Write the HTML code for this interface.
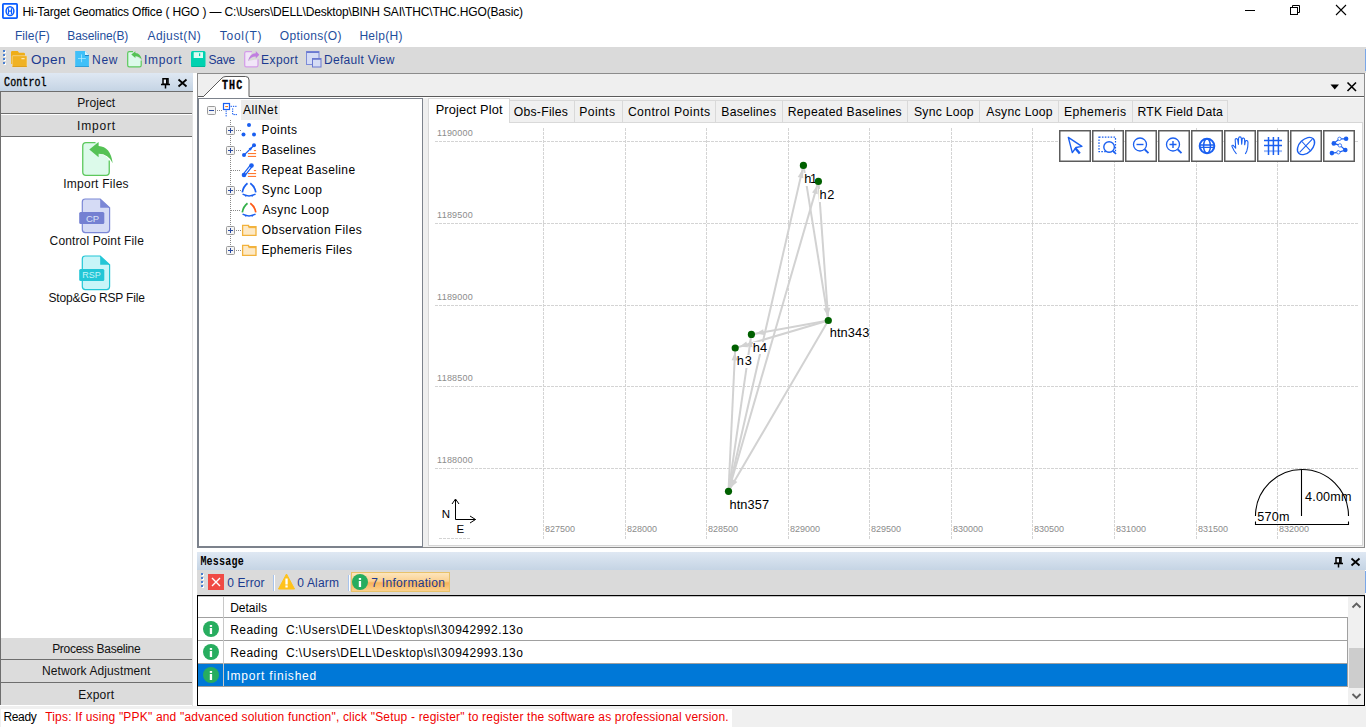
<!DOCTYPE html>
<html><head><meta charset="utf-8"><title>HGO</title>
<style>
html,body{margin:0;padding:0;width:1366px;height:727px;overflow:hidden;background:#fff;position:relative}
.t{position:absolute;white-space:pre;line-height:1;font-family:"Liberation Sans",sans-serif}
svg{overflow:visible}
</style></head><body>
<div style="position:absolute;left:0px;top:0px;width:1366px;height:23px;background:#fff"></div>
<svg style="position:absolute;left:2px;top:3px;" width="17" height="17" viewBox="0 0 17 17"><rect x="0.9" y="0.9" width="14.2" height="14.2" rx="0.8" fill="#fff" stroke="#0a5cff" stroke-width="1.8"/><ellipse cx="8" cy="8.1" rx="3.9" ry="4.4" fill="none" stroke="#0a5cff" stroke-width="1.5"/><path d="M6.5 5.3V10.9M9.5 5.3V10.9M6.5 8.1H9.5" stroke="#0a5cff" stroke-width="1.2"/></svg>
<div class="t" style="left:22.44px;top:5.84px;font-size:12px;color:#000;font-weight:normal;font-family:'Liberation Sans', sans-serif;letter-spacing:-0.156px;">Hi-Target Geomatics Office ( HGO ) — C:\Users\DELL\Desktop\BINH SAI\THC\THC.HGO(Basic)</div>
<div style="position:absolute;left:1245px;top:10px;width:10px;height:1px;background:#000"></div>
<svg style="position:absolute;left:1289px;top:4px;" width="12" height="12" viewBox="0 0 12 12"><rect x="1.5" y="3.5" width="7" height="7" fill="none" stroke="#000" stroke-width="1"/><path d="M3.5 3.5V1.5H10.5V8.5H8.5" fill="none" stroke="#000" stroke-width="1"/></svg>
<svg style="position:absolute;left:1335px;top:4px;" width="12" height="12" viewBox="0 0 12 12"><path d="M1 1L11 11M11 1L1 11" stroke="#000" stroke-width="1.1"/></svg>
<div class="t" style="left:15.04px;top:29.84px;font-size:12px;color:#1f4e9c;font-weight:normal;font-family:'Liberation Sans', sans-serif;letter-spacing:0.010px;">File(F)</div>
<div class="t" style="left:67.34px;top:29.84px;font-size:12px;color:#1f4e9c;font-weight:normal;font-family:'Liberation Sans', sans-serif;letter-spacing:-0.100px;">Baseline(B)</div>
<div class="t" style="left:147.60px;top:29.84px;font-size:12px;color:#1f4e9c;font-weight:normal;font-family:'Liberation Sans', sans-serif;letter-spacing:0.393px;">Adjust(N)</div>
<div class="t" style="left:219.76px;top:29.84px;font-size:12px;color:#1f4e9c;font-weight:normal;font-family:'Liberation Sans', sans-serif;letter-spacing:0.740px;">Tool(T)</div>
<div class="t" style="left:279.86px;top:29.84px;font-size:12px;color:#1f4e9c;font-weight:normal;font-family:'Liberation Sans', sans-serif;letter-spacing:0.327px;">Options(O)</div>
<div class="t" style="left:359.44px;top:29.84px;font-size:12px;color:#1f4e9c;font-weight:normal;font-family:'Liberation Sans', sans-serif;letter-spacing:0.267px;">Help(H)</div>
<div style="position:absolute;left:0px;top:47px;width:1366px;height:26px;background:#dadada"></div>
<div style="position:absolute;left:1365px;top:49px;width:1px;height:22px;background:#7aa7e8"></div>
<div style="position:absolute;left:3px;top:50px;width:2px;height:2px;background:#4a7fd0;box-shadow:1px 1px 0 #fff"></div>
<div style="position:absolute;left:3px;top:54px;width:2px;height:2px;background:#4a7fd0;box-shadow:1px 1px 0 #fff"></div>
<div style="position:absolute;left:3px;top:58px;width:2px;height:2px;background:#4a7fd0;box-shadow:1px 1px 0 #fff"></div>
<div style="position:absolute;left:3px;top:62px;width:2px;height:2px;background:#4a7fd0;box-shadow:1px 1px 0 #fff"></div>
<div class="t" style="left:30.89px;top:52.79px;font-size:13.6px;color:#1b3a8f;font-weight:normal;font-family:'Liberation Sans', sans-serif;letter-spacing:0.448px;">Open</div>
<div class="t" style="left:92.04px;top:53.84px;font-size:12px;color:#1b3a8f;font-weight:normal;font-family:'Liberation Sans', sans-serif;letter-spacing:0.700px;">New</div>
<div class="t" style="left:143.92px;top:53.84px;font-size:12px;color:#1b3a8f;font-weight:normal;font-family:'Liberation Sans', sans-serif;letter-spacing:0.716px;">Import</div>
<div class="t" style="left:208.46px;top:53.84px;font-size:12px;color:#1b3a8f;font-weight:normal;font-family:'Liberation Sans', sans-serif;letter-spacing:-0.227px;">Save</div>
<div class="t" style="left:261.04px;top:53.84px;font-size:12px;color:#1b3a8f;font-weight:normal;font-family:'Liberation Sans', sans-serif;letter-spacing:0.420px;">Export</div>
<div class="t" style="left:324.04px;top:53.84px;font-size:12px;color:#1b3a8f;font-weight:normal;font-family:'Liberation Sans', sans-serif;letter-spacing:0.296px;">Default View</div>
<svg style="position:absolute;left:11px;top:51px;" width="17" height="17" viewBox="0 0 17 17"><path d="M0 1.2Q0 0 1.2 0H6.8L8 1.8H12.8Q14 1.8 14 3V13H0Z" fill="#efae18"/><path d="M1.2 15.2V5.4Q1.2 4.7 2 4.7H15.2Q16 4.7 16 5.5V15Q16 16 15 16H2Q1.2 16 1.2 15.2Z" fill="#f0b224" stroke="#f6e2b8" stroke-width="0.6"/><rect x="1.5" y="15" width="14.3" height="1" fill="#e0a01c"/><rect x="10.3" y="7.1" width="3.4" height="1.1" rx="0.5" fill="#fde6b0"/></svg>
<svg style="position:absolute;left:75px;top:51px;" width="15" height="17" viewBox="0 0 15 17"><path d="M0.2 0H10L13.9 4V16H0.2Z" fill="#3fc0f8"/><path d="M10 0V4H13.9Z" fill="#d9f3fd"/><rect x="10" y="4" width="3.9" height="0.9" fill="#2a78b8"/><rect x="0.2" y="15" width="13.7" height="1" fill="#2f9fd8"/><path d="M3 7.5H10.8M6.5 3.4V11.2" stroke="#b8ecfd" stroke-width="0.7"/></svg>
<svg style="position:absolute;left:127px;top:51px;" width="17" height="17" viewBox="0 0 17 17"><path d="M0.7 2.3Q0.7 0.7 2.3 0.7H6L8.4 4.5L14.2 9V14.3Q14.2 15.9 12.6 15.9H2.3Q0.7 15.9 0.7 14.3Z" fill="#dcfaea"/><path d="M6 0.7H2.3Q0.7 0.7 0.7 2.3V14.3Q0.7 15.9 2.3 15.9H12.6Q14.2 15.9 14.2 14.3V9.5" fill="none" stroke="#5cc85c" stroke-width="1.2"/><path d="M4.3 3.4L8.4 0.3V2Q13.8 2.5 14.8 8.9Q12.5 5.3 8.4 5.2V7.1Z" fill="#55c255"/></svg>
<svg style="position:absolute;left:191px;top:51px;" width="15" height="17" viewBox="0 0 15 17"><rect x="0" y="0" width="14.5" height="16" rx="1.5" fill="#00d2b0"/><rect x="2.7" y="1.2" width="9.3" height="5.8" fill="#dcfdf4"/><rect x="8" y="2.3" width="1.2" height="2.8" fill="#00d2b0"/><rect x="0.5" y="15" width="13.5" height="1" fill="#00b898"/></svg>
<svg style="position:absolute;left:244px;top:51px;" width="17" height="17" viewBox="0 0 17 17"><path d="M0.7 2.3Q0.7 0.7 2.3 0.7H8L4 10L14 8.2V14.3Q14 15.9 12.4 15.9H2.3Q0.7 15.9 0.7 14.3Z" fill="#f1e6f8"/><path d="M8 0.7H2.3Q0.7 0.7 0.7 2.3V14.3Q0.7 15.9 2.3 15.9H12.4Q14 15.9 14 14.3V8.2" fill="none" stroke="#d39be8" stroke-width="1.2"/><path d="M15.3 3.8L11.8 0.1V2.2Q5.5 2.5 4.1 10.2Q6.5 5.8 11.8 5.6V7.4Z" fill="#c07ee0"/></svg>
<svg style="position:absolute;left:306px;top:51px;" width="16" height="17" viewBox="0 0 16 17"><rect x="0.5" y="0.5" width="12.5" height="13" fill="#d5dcf5" stroke="#7d8bd8" stroke-width="1"/><rect x="0.5" y="0.5" width="12.5" height="1.5" fill="#6a79cf"/><rect x="6.5" y="7.5" width="8.5" height="8.5" fill="#d5dcf5" stroke="#6a79cf" stroke-width="1"/><rect x="6.5" y="7.5" width="8.5" height="1.3" fill="#6a79cf"/></svg>
<div style="position:absolute;left:0px;top:73px;width:193px;height:18px;background:linear-gradient(#dfe8f3,#c5d4e4)"></div>
<div class="t" style="left:4.05px;top:79.03px;font-size:10px;color:#000;font-weight:normal;font-family:'Liberation Mono', monospace;letter-spacing:0.083px;transform:scaleY(1.2);transform-origin:0 7.665px;-webkit-text-stroke:0.3px #000">Control</div>
<svg style="position:absolute;left:161px;top:78px;" width="9" height="11" viewBox="0 0 9 11"><rect x="2" y="0.75" width="5" height="5.5" fill="#e8eef6" stroke="#000" stroke-width="1.5"/><rect x="5" y="1" width="1.6" height="5" fill="#000"/><path d="M0 6.5H9M4.5 6.5V10.5" stroke="#000" stroke-width="1.5"/></svg>
<svg style="position:absolute;left:177px;top:78px;" width="11" height="10" viewBox="0 0 11 10"><path d="M1.5 1.5L9.5 8.5M9.5 1.5L1.5 8.5" stroke="#000" stroke-width="1.8"/></svg>
<div style="position:absolute;left:0px;top:91px;width:193px;height:615px;background:#fff"></div>
<div style="position:absolute;left:192px;top:91px;width:1px;height:615px;background:#e3e3e3"></div>
<div style="position:absolute;left:0px;top:91px;width:1px;height:614px;background:#6e6e6e"></div>
<div style="position:absolute;left:0px;top:91px;width:193px;height:1px;background:#6e6e6e"></div>
<div style="position:absolute;left:1px;top:92px;width:191px;height:21px;background:#dcdcdc"></div>
<div class="t" style="left:77.19px;top:96.54px;font-size:12px;color:#111;font-weight:normal;font-family:'Liberation Sans', sans-serif;letter-spacing:0.100px;">Project</div>
<div style="position:absolute;left:1px;top:113px;width:191px;height:1px;background:#6e6e6e"></div>
<div style="position:absolute;left:1px;top:114px;width:191px;height:1px;background:#fff"></div>
<div style="position:absolute;left:1px;top:115px;width:191px;height:21px;background:#dcdcdc"></div>
<div class="t" style="left:77.07px;top:119.84px;font-size:12px;color:#111;font-weight:normal;font-family:'Liberation Sans', sans-serif;letter-spacing:0.816px;">Import</div>
<div style="position:absolute;left:1px;top:136px;width:191px;height:1px;background:#6e6e6e"></div>
<div style="position:absolute;left:1px;top:638px;width:191px;height:21px;background:#dcdcdc"></div>
<div class="t" style="left:52.14px;top:642.84px;font-size:12px;color:#111;font-weight:normal;font-family:'Liberation Sans', sans-serif;letter-spacing:-0.280px;">Process Baseline</div>
<div style="position:absolute;left:1px;top:659px;width:191px;height:1px;background:#6e6e6e"></div>
<div style="position:absolute;left:1px;top:660px;width:191px;height:22px;background:#dcdcdc"></div>
<div class="t" style="left:41.94px;top:665.44px;font-size:12px;color:#111;font-weight:normal;font-family:'Liberation Sans', sans-serif;letter-spacing:0.102px;">Network Adjustment</div>
<div style="position:absolute;left:1px;top:682px;width:191px;height:1px;background:#6e6e6e"></div>
<div style="position:absolute;left:1px;top:683px;width:191px;height:22px;background:#dcdcdc"></div>
<div class="t" style="left:78.34px;top:688.74px;font-size:12px;color:#111;font-weight:normal;font-family:'Liberation Sans', sans-serif;letter-spacing:0.200px;">Export</div>
<svg style="position:absolute;left:80px;top:140px;" width="36" height="38" viewBox="0 0 36 38"><path d="M15.5 2.6H6Q2.75 2.6 2.75 6V32Q2.75 35.3 6 35.3H26Q29.25 35.3 29.25 32V20.5Q26 14 18.6 14V2.6Z" fill="#dcfaea"/><path d="M15.5 2.6H6Q2.75 2.6 2.75 6V32Q2.75 35.3 6 35.3H26Q29.25 35.3 29.25 32V20.5" fill="none" stroke="#5cc85c" stroke-width="1.3"/><path d="M9.3 9.6L18.6 2.1V6Q30.5 6.5 32.7 23.3Q28.5 13.8 18.6 13.8V17.3Z" fill="#55c255"/></svg>
<div class="t" style="left:63.22px;top:177.74px;font-size:12px;color:#111;font-weight:normal;font-family:'Liberation Sans', sans-serif;letter-spacing:0.245px;">Import Files</div>
<svg style="position:absolute;left:76px;top:196px;" width="38" height="40" viewBox="0 0 38 40"><path d="M9.3 3H24.2L33.6 11.8V33.6Q33.6 36.6 30.6 36.6H9.3Q6.3 36.6 6.3 33.6V6Q6.3 3 9.3 3Z" fill="#d5dbf5" stroke="#7b87d6" stroke-width="1.2"/><path d="M24.2 3V11.8H33.6Z" fill="#7b87d6"/><rect x="3.2" y="16" width="25.1" height="12" rx="1.5" fill="#7480d2"/><text x="16.5" y="25.6" font-size="9.5" font-family="Liberation Sans" fill="#dde2f7" text-anchor="middle">CP</text></svg>
<div class="t" style="left:49.60px;top:235.14px;font-size:12px;color:#111;font-weight:normal;font-family:'Liberation Sans', sans-serif;letter-spacing:0.129px;">Control Point File</div>
<svg style="position:absolute;left:76px;top:253px;" width="38" height="40" viewBox="0 0 38 40"><path d="M9.3 3H24.2L33.6 11.8V33.6Q33.6 36.6 30.6 36.6H9.3Q6.3 36.6 6.3 33.6V6Q6.3 3 9.3 3Z" fill="#c8f5f8" stroke="#22c6d6" stroke-width="1.2"/><path d="M24.2 3V11.8H33.6Z" fill="#22c6d6"/><rect x="3.2" y="16" width="25.1" height="12" rx="1.5" fill="#22c6d6"/><text x="15.5" y="25.4" font-size="9" font-family="Liberation Sans" fill="#c8f5f8" text-anchor="middle">RSP</text></svg>
<div class="t" style="left:48.56px;top:291.84px;font-size:12px;color:#111;font-weight:normal;font-family:'Liberation Sans', sans-serif;letter-spacing:-0.189px;">Stop&amp;Go RSP File</div>
<!--DOC-->
<div style="position:absolute;left:193px;top:73px;width:1173px;height:479px;background:#fff"></div>
<div style="position:absolute;left:197px;top:73px;width:1168px;height:475px;background:#efefef;border:1px solid #8c8c8c;box-sizing:border-box"></div>
<div style="position:absolute;left:198px;top:96px;width:1166px;height:1px;background:#5a5a5a"></div>
<div style="position:absolute;left:198px;top:97px;width:1166px;height:1px;background:#fff"></div>
<svg style="position:absolute;left:198px;top:74px;" width="60" height="24" viewBox="0 0 60 24"><path d="M5.5 22.5L24 4Q25.5 2.5 28 2.5H47.5Q51 2.5 51 6V22.5" fill="#fff" stroke="#5a5a5a" stroke-width="1"/><rect x="6" y="22" width="44.5" height="2" fill="#fff"/></svg>
<div class="t" style="left:221.90px;top:82.34px;font-size:10px;color:#000;font-weight:bold;font-family:'Liberation Mono', monospace;letter-spacing:1.200px;transform:scaleY(1.2);transform-origin:0 7.665px;-webkit-text-stroke:0.3px #000">THC</div>
<svg style="position:absolute;left:1330px;top:84px;" width="10" height="7" viewBox="0 0 10 7"><path d="M0.5 0.5H9L4.75 5.5Z" fill="#000"/></svg>
<svg style="position:absolute;left:1346px;top:81px;" width="12" height="11" viewBox="0 0 12 11"><path d="M1.5 1.5L10 10M10 1.5L1.5 10" stroke="#000" stroke-width="1.6"/></svg>
<div style="position:absolute;left:197px;top:98px;width:226px;height:450px;background:#fff;border:1px solid #7c828c;border-left:2px solid #7c828c;border-bottom:2px solid #7c828c;box-sizing:border-box"></div>
<div style="position:absolute;left:423px;top:98px;width:5px;height:448px;background:#efefef"></div>
<div style="position:absolute;left:241px;top:100px;width:39px;height:20px;background:#ececec"></div>
<svg style="position:absolute;left:207px;top:106px;" width="9" height="9" viewBox="0 0 9 9"><rect x="0.5" y="0.5" width="8" height="8" rx="1" fill="#f4f4f4" stroke="#9a9a9a"/><path d="M2 4.5H7" stroke="#2a4aa0" stroke-width="1"/></svg>
<div style="position:absolute;left:217px;top:110px;width:5px;height:1px;background:repeating-linear-gradient(90deg,#888 0 1px,transparent 1px 2px)"></div>
<svg style="position:absolute;left:222px;top:102px;" width="16" height="16" viewBox="0 0 16 16"><rect x="1.5" y="1.5" width="6" height="6" fill="#fff" stroke="#1a5ff0" stroke-width="1.2"/><rect x="3.2" y="4" width="2.8" height="1.1" fill="#ff7a1a"/><rect x="3.6" y="8.5" width="1.1" height="1.3" fill="#1a5ff0"/><rect x="3.6" y="10.8" width="1.1" height="1.3" fill="#1a5ff0"/><rect x="3.6" y="13.1" width="1.1" height="1.3" fill="#1a5ff0"/><rect x="8.6" y="3.8" width="1.3" height="1.1" fill="#1a5ff0"/><rect x="10.9" y="3.8" width="1.3" height="1.1" fill="#1a5ff0"/><rect x="13.2" y="3.8" width="1.3" height="1.1" fill="#1a5ff0"/><rect x="10.1" y="6.4" width="1.1" height="1.3" fill="#1a5ff0"/><rect x="10.1" y="8.7" width="1.1" height="1.3" fill="#1a5ff0"/><rect x="10.1" y="11" width="1.1" height="1.3" fill="#1a5ff0"/><rect x="11.5" y="12" width="1.3" height="1.1" fill="#1a5ff0"/><rect x="13.6" y="12" width="1.3" height="1.1" fill="#1a5ff0"/></svg>
<div class="t" style="left:243.10px;top:103.84px;font-size:12px;color:#000;font-weight:normal;font-family:'Liberation Sans', sans-serif;letter-spacing:0.496px;">AllNet</div>
<div style="position:absolute;left:230px;top:120px;width:1px;height:130px;background:repeating-linear-gradient(180deg,#888 0 1px,transparent 1px 2px)"></div>
<svg style="position:absolute;left:226px;top:126px;" width="9" height="9" viewBox="0 0 9 9"><rect x="0.5" y="0.5" width="8" height="8" rx="1" fill="#f4f4f4" stroke="#9a9a9a"/><path d="M2 4.5H7" stroke="#2a4aa0" stroke-width="1"/><path d="M4.5 2V7" stroke="#2a4aa0" stroke-width="1"/></svg>
<div style="position:absolute;left:236px;top:130px;width:5px;height:1px;background:repeating-linear-gradient(90deg,#888 0 1px,transparent 1px 2px)"></div>
<div class="t" style="left:261.44px;top:123.64px;font-size:12px;color:#000;font-weight:normal;font-family:'Liberation Sans', sans-serif;letter-spacing:0.464px;">Points</div>
<svg style="position:absolute;left:226px;top:146px;" width="9" height="9" viewBox="0 0 9 9"><rect x="0.5" y="0.5" width="8" height="8" rx="1" fill="#f4f4f4" stroke="#9a9a9a"/><path d="M2 4.5H7" stroke="#2a4aa0" stroke-width="1"/><path d="M4.5 2V7" stroke="#2a4aa0" stroke-width="1"/></svg>
<div style="position:absolute;left:236px;top:150px;width:5px;height:1px;background:repeating-linear-gradient(90deg,#888 0 1px,transparent 1px 2px)"></div>
<div class="t" style="left:261.44px;top:143.64px;font-size:12px;color:#000;font-weight:normal;font-family:'Liberation Sans', sans-serif;letter-spacing:0.295px;">Baselines</div>
<div style="position:absolute;left:231px;top:170px;width:10px;height:1px;background:repeating-linear-gradient(90deg,#888 0 1px,transparent 1px 2px)"></div>
<div class="t" style="left:261.44px;top:163.64px;font-size:12px;color:#000;font-weight:normal;font-family:'Liberation Sans', sans-serif;letter-spacing:0.399px;">Repeat Baseline</div>
<svg style="position:absolute;left:226px;top:186px;" width="9" height="9" viewBox="0 0 9 9"><rect x="0.5" y="0.5" width="8" height="8" rx="1" fill="#f4f4f4" stroke="#9a9a9a"/><path d="M2 4.5H7" stroke="#2a4aa0" stroke-width="1"/><path d="M4.5 2V7" stroke="#2a4aa0" stroke-width="1"/></svg>
<div style="position:absolute;left:236px;top:190px;width:5px;height:1px;background:repeating-linear-gradient(90deg,#888 0 1px,transparent 1px 2px)"></div>
<div class="t" style="left:261.86px;top:183.64px;font-size:12px;color:#000;font-weight:normal;font-family:'Liberation Sans', sans-serif;letter-spacing:0.428px;">Sync Loop</div>
<div style="position:absolute;left:231px;top:210px;width:10px;height:1px;background:repeating-linear-gradient(90deg,#888 0 1px,transparent 1px 2px)"></div>
<div class="t" style="left:262.40px;top:203.64px;font-size:12px;color:#000;font-weight:normal;font-family:'Liberation Sans', sans-serif;letter-spacing:0.420px;">Async Loop</div>
<svg style="position:absolute;left:226px;top:226px;" width="9" height="9" viewBox="0 0 9 9"><rect x="0.5" y="0.5" width="8" height="8" rx="1" fill="#f4f4f4" stroke="#9a9a9a"/><path d="M2 4.5H7" stroke="#2a4aa0" stroke-width="1"/><path d="M4.5 2V7" stroke="#2a4aa0" stroke-width="1"/></svg>
<div style="position:absolute;left:236px;top:230px;width:5px;height:1px;background:repeating-linear-gradient(90deg,#888 0 1px,transparent 1px 2px)"></div>
<div class="t" style="left:261.86px;top:223.64px;font-size:12px;color:#000;font-weight:normal;font-family:'Liberation Sans', sans-serif;letter-spacing:0.406px;">Observation Files</div>
<svg style="position:absolute;left:226px;top:246px;" width="9" height="9" viewBox="0 0 9 9"><rect x="0.5" y="0.5" width="8" height="8" rx="1" fill="#f4f4f4" stroke="#9a9a9a"/><path d="M2 4.5H7" stroke="#2a4aa0" stroke-width="1"/><path d="M4.5 2V7" stroke="#2a4aa0" stroke-width="1"/></svg>
<div style="position:absolute;left:236px;top:250px;width:5px;height:1px;background:repeating-linear-gradient(90deg,#888 0 1px,transparent 1px 2px)"></div>
<div class="t" style="left:261.44px;top:243.64px;font-size:12px;color:#000;font-weight:normal;font-family:'Liberation Sans', sans-serif;letter-spacing:0.331px;">Ephemeris Files</div>
<svg style="position:absolute;left:241px;top:122px;" width="16" height="16" viewBox="0 0 16 16"><circle cx="8" cy="3" r="2" fill="#1a5ff0"/><circle cx="2.5" cy="12.5" r="2" fill="#1a5ff0"/><circle cx="13" cy="12.5" r="2" fill="#1a5ff0"/></svg>
<svg style="position:absolute;left:241px;top:142px;" width="16" height="16" viewBox="0 0 16 16"><path d="M3 13.1L13 3.2" stroke="#1a5ff0" stroke-width="1.3"/><path d="M12 4.2L7.6 6.6L9.8 8.8Z" fill="#1a5ff0"/><circle cx="3" cy="13.1" r="2" fill="#1a5ff0"/><circle cx="13" cy="3.2" r="2" fill="#1a5ff0"/><path d="M12.9 8.6H15.1M6.9 11.6H15.1M6.9 14.4H15.1" stroke="#ff6a1a" stroke-width="1"/></svg>
<svg style="position:absolute;left:241px;top:162px;" width="16" height="16" viewBox="0 0 16 16"><path d="M3 13L10.5 3.5" stroke="#1a5ff0" stroke-width="3.6"/><path d="M3 13L10.5 3.5" stroke="#fff" stroke-width="1.1"/><circle cx="3" cy="13" r="2.3" fill="#1a5ff0"/><circle cx="10.5" cy="3.5" r="2.3" fill="#1a5ff0"/><path d="M12.9 8.6H15.1M6.9 11.6H15.1M6.9 14.4H15.1" stroke="#ff6a1a" stroke-width="1"/></svg>
<svg style="position:absolute;left:241px;top:182px;" width="16" height="16" viewBox="0 0 16 16"><path d="M6.5 1.3Q2.3 4.5 1.3 10.4" fill="none" stroke="#1a5ff0" stroke-width="1.7"/><path d="M9.3 1.3Q13.8 4.5 14.8 10.4" fill="none" stroke="#1a5ff0" stroke-width="1.7"/><path d="M1.6 12.2Q8 15.6 14.5 12.2" fill="none" stroke="#1a5ff0" stroke-width="1.5"/><path d="M3 12.6L6.5 12.9L4.8 15Z M13 12.6L9.5 12.9L11.2 15Z" fill="#1a5ff0"/></svg>
<svg style="position:absolute;left:241px;top:202px;" width="16" height="16" viewBox="0 0 16 16"><path d="M6.5 1.3Q2.3 4.5 1.3 10.4" fill="none" stroke="#34b04a" stroke-width="1.7"/><path d="M9.3 1.3Q13.8 4.5 14.8 10.4" fill="none" stroke="#ff5a14" stroke-width="1.7"/><path d="M1.6 12.2Q8 15.6 14.5 12.2" fill="none" stroke="#1a5ff0" stroke-width="1.5"/><path d="M3 12.6L6.5 12.9L4.8 15Z M13 12.6L9.5 12.9L11.2 15Z" fill="#1a5ff0"/></svg>
<svg style="position:absolute;left:241px;top:222px;" width="16" height="16" viewBox="0 0 16 16"><path d="M1.6 3.4H7.6V4.6H15V13.4H1.6Z" fill="#fde9c6" stroke="#f2b23c" stroke-width="1.3"/><path d="M7.6 5.6H15" stroke="#f2b23c" stroke-width="1.1"/></svg>
<svg style="position:absolute;left:241px;top:242px;" width="16" height="16" viewBox="0 0 16 16"><path d="M1.6 3.4H7.6V4.6H15V13.4H1.6Z" fill="#fde9c6" stroke="#f2b23c" stroke-width="1.3"/><path d="M7.6 5.6H15" stroke="#f2b23c" stroke-width="1.1"/></svg>
<div style="position:absolute;left:428px;top:122px;width:935px;height:424px;background:#fff;border:1px solid #d6d6d6;box-sizing:border-box"></div>
<div style="position:absolute;left:509px;top:100px;width:66px;height:23px;background:#f0f0f0;border:1px solid #d9d9d9;box-sizing:border-box"></div>
<div class="t" style="left:513.75px;top:105.57px;font-size:12.2px;color:#000;font-weight:normal;font-family:'Liberation Sans', sans-serif;letter-spacing:0.257px;">Obs-Files</div>
<div style="position:absolute;left:574px;top:100px;width:49px;height:23px;background:#f0f0f0;border:1px solid #d9d9d9;box-sizing:border-box"></div>
<div class="t" style="left:579.22px;top:105.57px;font-size:12.2px;color:#000;font-weight:normal;font-family:'Liberation Sans', sans-serif;letter-spacing:0.377px;">Points</div>
<div style="position:absolute;left:622px;top:100px;width:94px;height:23px;background:#f0f0f0;border:1px solid #d9d9d9;box-sizing:border-box"></div>
<div class="t" style="left:627.89px;top:105.57px;font-size:12.2px;color:#000;font-weight:normal;font-family:'Liberation Sans', sans-serif;letter-spacing:0.432px;">Control Points</div>
<div style="position:absolute;left:715px;top:100px;width:68px;height:23px;background:#f0f0f0;border:1px solid #d9d9d9;box-sizing:border-box"></div>
<div class="t" style="left:721.32px;top:105.57px;font-size:12.2px;color:#000;font-weight:normal;font-family:'Liberation Sans', sans-serif;letter-spacing:0.227px;">Baselines</div>
<div style="position:absolute;left:782px;top:100px;width:126px;height:23px;background:#f0f0f0;border:1px solid #d9d9d9;box-sizing:border-box"></div>
<div class="t" style="left:787.72px;top:105.57px;font-size:12.2px;color:#000;font-weight:normal;font-family:'Liberation Sans', sans-serif;letter-spacing:0.283px;">Repeated Baselines</div>
<div style="position:absolute;left:907px;top:100px;width:73px;height:23px;background:#f0f0f0;border:1px solid #d9d9d9;box-sizing:border-box"></div>
<div class="t" style="left:913.95px;top:105.57px;font-size:12.2px;color:#000;font-weight:normal;font-family:'Liberation Sans', sans-serif;letter-spacing:0.262px;">Sync Loop</div>
<div style="position:absolute;left:979px;top:100px;width:80px;height:23px;background:#f0f0f0;border:1px solid #d9d9d9;box-sizing:border-box"></div>
<div class="t" style="left:986.30px;top:105.57px;font-size:12.2px;color:#000;font-weight:normal;font-family:'Liberation Sans', sans-serif;letter-spacing:0.294px;">Async Loop</div>
<div style="position:absolute;left:1058px;top:100px;width:75px;height:23px;background:#f0f0f0;border:1px solid #d9d9d9;box-sizing:border-box"></div>
<div class="t" style="left:1064.02px;top:105.57px;font-size:12.2px;color:#000;font-weight:normal;font-family:'Liberation Sans', sans-serif;letter-spacing:0.473px;">Ephemeris</div>
<div style="position:absolute;left:1132px;top:100px;width:96px;height:23px;background:#f0f0f0;border:1px solid #d9d9d9;box-sizing:border-box"></div>
<div class="t" style="left:1137.62px;top:105.57px;font-size:12.2px;color:#000;font-weight:normal;font-family:'Liberation Sans', sans-serif;letter-spacing:0.156px;">RTK Field Data</div>
<div style="position:absolute;left:428px;top:98px;width:82px;height:25px;background:#fff;border:1px solid #d9d9d9;border-bottom:none;box-sizing:border-box"></div>
<div class="t" style="left:435.68px;top:103.66px;font-size:12.8px;color:#000;font-weight:normal;font-family:'Liberation Sans', sans-serif;letter-spacing:0.125px;">Project Plot</div>
<svg style="position:absolute;left:0px;top:0px;pointer-events:none" width="1366" height="727" viewBox="0 0 1366 727"><path d="M543.5 128V539" stroke="#d4d4d4" stroke-width="1" stroke-dasharray="3 1"/><path d="M625.5 128V539" stroke="#d4d4d4" stroke-width="1" stroke-dasharray="3 1"/><path d="M706.5 128V539" stroke="#d4d4d4" stroke-width="1" stroke-dasharray="3 1"/><path d="M788.5 128V539" stroke="#d4d4d4" stroke-width="1" stroke-dasharray="3 1"/><path d="M869.5 128V539" stroke="#d4d4d4" stroke-width="1" stroke-dasharray="3 1"/><path d="M951.5 128V539" stroke="#d4d4d4" stroke-width="1" stroke-dasharray="3 1"/><path d="M1032.5 128V539" stroke="#d4d4d4" stroke-width="1" stroke-dasharray="3 1"/><path d="M1114.5 128V539" stroke="#d4d4d4" stroke-width="1" stroke-dasharray="3 1"/><path d="M1196.5 128V539" stroke="#d4d4d4" stroke-width="1" stroke-dasharray="3 1"/><path d="M1277.5 128V539" stroke="#d4d4d4" stroke-width="1" stroke-dasharray="3 1"/><path d="M435 141.5H1358" stroke="#d4d4d4" stroke-width="1" stroke-dasharray="3 1"/><path d="M435 223.5H1358" stroke="#d4d4d4" stroke-width="1" stroke-dasharray="3 1"/><path d="M435 305.5H1358" stroke="#d4d4d4" stroke-width="1" stroke-dasharray="3 1"/><path d="M435 386.5H1358" stroke="#d4d4d4" stroke-width="1" stroke-dasharray="3 1"/><path d="M435 468.5H1358" stroke="#d4d4d4" stroke-width="1" stroke-dasharray="3 1"/><path d="M439 538.5H471" stroke="#d4d4d4" stroke-width="1" stroke-dasharray="3 1"/><path d="M728.5 491.3L803.4 165.4" stroke="#d2d2d2" stroke-width="2"/><path d="M802.4 169.8L803.5 178.3L797.7 176.9Z" fill="#d2d2d2"/><path d="M728.5 491.3L818.4 181.4" stroke="#d2d2d2" stroke-width="2"/><path d="M817.1 185.7L817.8 194.2L812.0 192.6Z" fill="#d2d2d2"/><path d="M728.5 491.3L735.2 348.0" stroke="#d2d2d2" stroke-width="2"/><path d="M735.0 352.5L737.6 360.6L731.6 360.3Z" fill="#d2d2d2"/><path d="M728.5 491.3L751.4 334.4" stroke="#d2d2d2" stroke-width="2"/><path d="M750.8 338.9L752.6 347.2L746.6 346.3Z" fill="#d2d2d2"/><path d="M828.3 320.5L728.5 491.3" stroke="#d2d2d2" stroke-width="2"/><path d="M730.8 487.4L732.2 479.0L737.4 482.0Z" fill="#d2d2d2"/><path d="M803.4 165.4L828.3 320.5" stroke="#d2d2d2" stroke-width="2"/><path d="M827.6 316.1L823.4 308.6L829.3 307.7Z" fill="#d2d2d2"/><path d="M818.4 181.4L828.3 320.5" stroke="#d2d2d2" stroke-width="2"/><path d="M828.0 316.0L824.4 308.2L830.4 307.8Z" fill="#d2d2d2"/><path d="M828.3 320.5L751.4 334.4" stroke="#d2d2d2" stroke-width="2"/><path d="M755.8 333.6L763.2 329.2L764.2 335.1Z" fill="#d2d2d2"/><path d="M828.3 320.5L735.2 348.0" stroke="#d2d2d2" stroke-width="2"/><path d="M739.5 346.7L746.3 341.6L748.0 347.3Z" fill="#d2d2d2"/></svg>
<div class="t" style="left:544.89px;top:524.88px;font-size:9px;color:#8c8c8c;font-weight:normal;font-family:'Liberation Sans', sans-serif;letter-spacing:0.041px;">827500</div>
<div class="t" style="left:626.89px;top:524.88px;font-size:9px;color:#8c8c8c;font-weight:normal;font-family:'Liberation Sans', sans-serif;letter-spacing:0.041px;">828000</div>
<div class="t" style="left:707.89px;top:524.88px;font-size:9px;color:#8c8c8c;font-weight:normal;font-family:'Liberation Sans', sans-serif;letter-spacing:0.041px;">828500</div>
<div class="t" style="left:789.89px;top:524.88px;font-size:9px;color:#8c8c8c;font-weight:normal;font-family:'Liberation Sans', sans-serif;letter-spacing:0.041px;">829000</div>
<div class="t" style="left:870.89px;top:524.88px;font-size:9px;color:#8c8c8c;font-weight:normal;font-family:'Liberation Sans', sans-serif;letter-spacing:0.041px;">829500</div>
<div class="t" style="left:952.89px;top:524.88px;font-size:9px;color:#8c8c8c;font-weight:normal;font-family:'Liberation Sans', sans-serif;letter-spacing:0.041px;">830000</div>
<div class="t" style="left:1033.89px;top:524.88px;font-size:9px;color:#8c8c8c;font-weight:normal;font-family:'Liberation Sans', sans-serif;letter-spacing:0.041px;">830500</div>
<div class="t" style="left:1115.89px;top:524.88px;font-size:9px;color:#8c8c8c;font-weight:normal;font-family:'Liberation Sans', sans-serif;letter-spacing:0.041px;">831000</div>
<div class="t" style="left:1197.89px;top:524.88px;font-size:9px;color:#8c8c8c;font-weight:normal;font-family:'Liberation Sans', sans-serif;letter-spacing:0.041px;">831500</div>
<div class="t" style="left:1278.89px;top:524.88px;font-size:9px;color:#8c8c8c;font-weight:normal;font-family:'Liberation Sans', sans-serif;letter-spacing:0.041px;">832000</div>
<div class="t" style="left:437.12px;top:129.08px;font-size:9px;color:#8c8c8c;font-weight:normal;font-family:'Liberation Sans', sans-serif;letter-spacing:0.218px;">1190000</div>
<div class="t" style="left:437.12px;top:211.08px;font-size:9px;color:#8c8c8c;font-weight:normal;font-family:'Liberation Sans', sans-serif;letter-spacing:0.218px;">1189500</div>
<div class="t" style="left:437.12px;top:293.08px;font-size:9px;color:#8c8c8c;font-weight:normal;font-family:'Liberation Sans', sans-serif;letter-spacing:0.218px;">1189000</div>
<div class="t" style="left:437.12px;top:374.08px;font-size:9px;color:#8c8c8c;font-weight:normal;font-family:'Liberation Sans', sans-serif;letter-spacing:0.218px;">1188500</div>
<div class="t" style="left:437.12px;top:456.08px;font-size:9px;color:#8c8c8c;font-weight:normal;font-family:'Liberation Sans', sans-serif;letter-spacing:0.218px;">1188000</div>
<svg style="position:absolute;left:438px;top:496px;" width="42" height="42" viewBox="0 0 42 42"><path d="M17.5 3.5V23.5H37.5" fill="none" stroke="#000" stroke-width="1"/><path d="M14 8L17.5 3L21 8M32 20L37.5 23.5L32 27" fill="none" stroke="#000" stroke-width="1"/></svg>
<div class="t" style="left:441.78px;top:509.07px;font-size:11.5px;color:#000;font-weight:normal;font-family:'Liberation Sans', sans-serif;">N</div>
<div class="t" style="left:456.58px;top:524.27px;font-size:11.5px;color:#000;font-weight:normal;font-family:'Liberation Sans', sans-serif;">E</div>
<div class="t" style="left:804.30px;top:173.06px;font-size:12.8px;color:#000;font-weight:normal;font-family:'Liberation Sans', sans-serif;letter-spacing:-1.436px;background:#fff">h1</div>
<div class="t" style="left:819.40px;top:189.16px;font-size:12.8px;color:#000;font-weight:normal;font-family:'Liberation Sans', sans-serif;letter-spacing:0.728px;background:#fff">h2</div>
<div class="t" style="left:829.80px;top:327.26px;font-size:12.8px;color:#000;font-weight:normal;font-family:'Liberation Sans', sans-serif;letter-spacing:0.068px;background:#fff">htn343</div>
<div class="t" style="left:752.80px;top:341.56px;font-size:12.8px;color:#000;font-weight:normal;font-family:'Liberation Sans', sans-serif;letter-spacing:0.072px;background:#fff">h4</div>
<div class="t" style="left:736.70px;top:355.36px;font-size:12.8px;color:#000;font-weight:normal;font-family:'Liberation Sans', sans-serif;letter-spacing:1.000px;background:#fff">h3</div>
<div class="t" style="left:729.60px;top:498.86px;font-size:12.8px;color:#000;font-weight:normal;font-family:'Liberation Sans', sans-serif;letter-spacing:0.054px;background:#fff">htn357</div>
<svg style="position:absolute;left:0px;top:0px;pointer-events:none" width="1366" height="727" viewBox="0 0 1366 727"><circle cx="803.4" cy="165.4" r="3.6" fill="#006000"/><circle cx="818.4" cy="181.4" r="3.6" fill="#006000"/><circle cx="828.3" cy="320.5" r="3.6" fill="#006000"/><circle cx="751.4" cy="334.4" r="3.6" fill="#006000"/><circle cx="735.2" cy="348.0" r="3.6" fill="#006000"/><circle cx="728.5" cy="491.3" r="3.6" fill="#006000"/></svg>
<svg style="position:absolute;left:1250px;top:465px;" width="110" height="65" viewBox="0 0 110 65"><path d="M5.5 51A46.5 46.5 0 0 1 98.5 51" fill="none" stroke="#000" stroke-width="1.1"/><path d="M51.5 4.5V51" stroke="#000" stroke-width="1.1"/><path d="M5.5 56.5V59.5H98.5V56.5" fill="none" stroke="#000" stroke-width="1.1"/></svg>
<div class="t" style="left:1305.05px;top:491.23px;font-size:12.6px;color:#000;font-weight:normal;font-family:'Liberation Sans', sans-serif;letter-spacing:0.184px;">4.00mm</div>
<div class="t" style="left:1257.30px;top:510.73px;font-size:12.6px;color:#000;font-weight:normal;font-family:'Liberation Sans', sans-serif;letter-spacing:0.220px;">570m</div>
<svg style="position:absolute;left:1059px;top:130px;" width="32" height="32" viewBox="0 0 32 32"><rect x="0.75" y="0.75" width="30.5" height="30.5" fill="#fff" stroke="#5c5c5c" stroke-width="1.5"/><path d="M9.3 7.4L22.9 16.4L17 17.5L13.3 22.6Z" fill="none" stroke="#1a5ff0" stroke-width="1.4" stroke-linejoin="round"/><path d="M16.2 18L20.8 23.6" stroke="#1a5ff0" stroke-width="2.4"/></svg>
<svg style="position:absolute;left:1092px;top:130px;" width="32" height="32" viewBox="0 0 32 32"><rect x="0.75" y="0.75" width="30.5" height="30.5" fill="#fff" stroke="#5c5c5c" stroke-width="1.5"/><rect x="7" y="7.2" width="16.5" height="14.4" fill="none" stroke="#1a5ff0" stroke-width="1.2" stroke-dasharray="1.6 1.3"/><circle cx="17.1" cy="17" r="5.3" fill="#fff" stroke="#1a5ff0" stroke-width="1.4"/><path d="M20.9 20.9L24 24" stroke="#1a5ff0" stroke-width="1.7"/></svg>
<svg style="position:absolute;left:1125px;top:130px;" width="32" height="32" viewBox="0 0 32 32"><rect x="0.75" y="0.75" width="30.5" height="30.5" fill="#fff" stroke="#5c5c5c" stroke-width="1.5"/><circle cx="15" cy="14.5" r="6.5" fill="none" stroke="#1a5ff0" stroke-width="1.3"/><path d="M11.5 14.5H18.5" stroke="#1a5ff0" stroke-width="1.4"/><path d="M19.8 19.5L23.5 23.2" stroke="#1a5ff0" stroke-width="1.8"/></svg>
<svg style="position:absolute;left:1158px;top:130px;" width="32" height="32" viewBox="0 0 32 32"><rect x="0.75" y="0.75" width="30.5" height="30.5" fill="#fff" stroke="#5c5c5c" stroke-width="1.5"/><circle cx="15" cy="14.5" r="6.5" fill="none" stroke="#1a5ff0" stroke-width="1.3"/><path d="M11.5 14.5H18.5M15 11V18" stroke="#1a5ff0" stroke-width="1.4"/><path d="M19.8 19.5L23.5 23.2" stroke="#1a5ff0" stroke-width="1.8"/></svg>
<svg style="position:absolute;left:1191px;top:130px;" width="32" height="32" viewBox="0 0 32 32"><rect x="0.75" y="0.75" width="30.5" height="30.5" fill="#fff" stroke="#5c5c5c" stroke-width="1.5"/><circle cx="16" cy="16" r="7.3" fill="none" stroke="#1a5ff0" stroke-width="2"/><ellipse cx="16" cy="16" rx="3.4" ry="7.3" fill="none" stroke="#1a5ff0" stroke-width="1.5"/><path d="M9 15H23M9 17.3H23" stroke="#1a5ff0" stroke-width="1.3"/></svg>
<svg style="position:absolute;left:1224px;top:130px;" width="32" height="32" viewBox="0 0 32 32"><rect x="0.75" y="0.75" width="30.5" height="30.5" fill="#fff" stroke="#5c5c5c" stroke-width="1.5"/><path d="M12.5 24L10 20.5L8 16.5Q7.7 15 9 15.2L11.7 18.2L11.2 10Q11.2 8.5 12.4 8.6Q13.5 8.7 13.7 10L14.4 14.5L14.6 8Q14.8 6.8 16 6.9Q17.2 7 17.3 8.2L17.7 14.3L18.2 9Q18.5 7.9 19.6 8.1Q20.6 8.3 20.6 9.5L20.7 14.8L21.3 11.5Q21.7 10.4 22.8 10.6Q24 11 24 12.5Q24 18 22.8 21L21.3 24" fill="none" stroke="#1a5ff0" stroke-width="1.1" stroke-linejoin="round"/></svg>
<svg style="position:absolute;left:1257px;top:130px;" width="32" height="32" viewBox="0 0 32 32"><rect x="0.75" y="0.75" width="30.5" height="30.5" fill="#fff" stroke="#5c5c5c" stroke-width="1.5"/><path d="M11.5 7V25M16.4 7V25M21.4 7V25M7 10.4H25M7 15.4H25" stroke="#1a5ff0" stroke-width="1.5"/><path d="M7 21.1H25" stroke="#1a5ff0" stroke-width="2" opacity="0.4"/></svg>
<svg style="position:absolute;left:1290px;top:130px;" width="32" height="32" viewBox="0 0 32 32"><rect x="0.75" y="0.75" width="30.5" height="30.5" fill="#fff" stroke="#5c5c5c" stroke-width="1.5"/><ellipse cx="16" cy="16" rx="10.2" ry="6.6" transform="rotate(-45 16 16)" fill="none" stroke="#1a5ff0" stroke-width="1.4"/><path d="M9.6 22.3L22.3 9.2M11.9 11.5L20.3 20.7" stroke="#1a5ff0" stroke-width="1.1"/></svg>
<svg style="position:absolute;left:1323px;top:130px;" width="32" height="32" viewBox="0 0 32 32"><rect x="0.75" y="0.75" width="30.5" height="30.5" fill="#fff" stroke="#5c5c5c" stroke-width="1.5"/><path d="M23.1 8.8H16.5L10.8 13.4L16.9 15.4L22.3 20L15.4 22.3L8.9 23.1" fill="none" stroke="#1a5ff0" stroke-width="1.2"/><circle cx="23.1" cy="8.8" r="2.3" fill="#1a5ff0"/><circle cx="10.8" cy="13.4" r="2.3" fill="#1a5ff0"/><circle cx="22.3" cy="20" r="2.3" fill="#1a5ff0"/><circle cx="8.9" cy="23.1" r="2.3" fill="#1a5ff0"/><circle cx="16.5" cy="8.8" r="1.7" fill="#fff" stroke="#1a5ff0" stroke-width="0.8"/><circle cx="16.9" cy="15.4" r="1.7" fill="#fff" stroke="#1a5ff0" stroke-width="0.8"/><circle cx="15.4" cy="22.3" r="1.7" fill="#fff" stroke="#1a5ff0" stroke-width="0.8"/></svg>
<div style="position:absolute;left:197px;top:552px;width:1169px;height:18px;background:linear-gradient(#dfe8f3,#c5d4e4)"></div>
<div class="t" style="left:200.40px;top:558.34px;font-size:10px;color:#000;font-weight:bold;font-family:'Liberation Mono', monospace;letter-spacing:0.217px;transform:scaleY(1.2);transform-origin:0 7.665px">Message</div>
<svg style="position:absolute;left:1334px;top:557px;" width="9" height="11" viewBox="0 0 9 11"><rect x="2" y="0.75" width="5" height="5.5" fill="#e8eef6" stroke="#000" stroke-width="1.5"/><rect x="5" y="1" width="1.6" height="5" fill="#000"/><path d="M0 6.5H9M4.5 6.5V10.5" stroke="#000" stroke-width="1.5"/></svg>
<svg style="position:absolute;left:1350px;top:557px;" width="11" height="10" viewBox="0 0 11 10"><path d="M1.5 1.5L9.5 8.5M9.5 1.5L1.5 8.5" stroke="#000" stroke-width="1.8"/></svg>
<div style="position:absolute;left:197px;top:570px;width:1168px;height:25px;background:#dadada"></div>
<div style="position:absolute;left:1365px;top:571px;width:1px;height:22px;background:#7aa7e8"></div>
<div style="position:absolute;left:201px;top:573px;width:2px;height:2px;background:#4a7fd0;box-shadow:1px 1px 0 #fff"></div>
<div style="position:absolute;left:201px;top:577px;width:2px;height:2px;background:#4a7fd0;box-shadow:1px 1px 0 #fff"></div>
<div style="position:absolute;left:201px;top:581px;width:2px;height:2px;background:#4a7fd0;box-shadow:1px 1px 0 #fff"></div>
<div style="position:absolute;left:201px;top:585px;width:2px;height:2px;background:#4a7fd0;box-shadow:1px 1px 0 #fff"></div>
<svg style="position:absolute;left:208px;top:574px;" width="16" height="16" viewBox="0 0 16 16"><rect width="16" height="16" fill="#f04a44"/><path d="M4 4L12 12M12 4L4 12" stroke="#fff" stroke-width="1.4"/></svg>
<div class="t" style="left:227.22px;top:576.64px;font-size:12px;color:#1b3a8f;font-weight:normal;font-family:'Liberation Sans', sans-serif;letter-spacing:0.100px;">0 Error</div>
<div style="position:absolute;left:273px;top:575px;width:1px;height:16px;background:#a8c4ec;box-shadow:1px 0 0 #fff"></div>
<svg style="position:absolute;left:278px;top:573px;" width="17" height="17" viewBox="0 0 17 17"><path d="M8.5 1L16.5 16H0.5Z" fill="#ffc21a" stroke="#ffc21a" stroke-linejoin="round"/><rect x="7.4" y="5.5" width="2.3" height="6" fill="#fff"/><rect x="7.4" y="12.4" width="2.3" height="2.1" fill="#fff"/></svg>
<div class="t" style="left:297.32px;top:576.64px;font-size:12px;color:#1b3a8f;font-weight:normal;font-family:'Liberation Sans', sans-serif;letter-spacing:0.147px;">0 Alarm</div>
<div style="position:absolute;left:348px;top:575px;width:1px;height:16px;background:#a8c4ec;box-shadow:1px 0 0 #fff"></div>
<div style="position:absolute;left:351px;top:572px;width:99px;height:20px;background:linear-gradient(#fde5bd 0%,#fbd191 45%,#f7b25a 55%,#fcd28e 100%);border:1px solid #e8c26a;box-sizing:border-box"></div>
<svg style="position:absolute;left:352px;top:574px;" width="16" height="16" viewBox="0 0 16 16"><circle cx="8" cy="8" r="8" fill="#27ad5f"/><rect x="6.8" y="7" width="2.3" height="6" fill="#fff"/><rect x="6.8" y="4" width="2.3" height="1.9" fill="#fff"/></svg>
<div class="t" style="left:371.20px;top:576.64px;font-size:12px;color:#1b3a8f;font-weight:normal;font-family:'Liberation Sans', sans-serif;letter-spacing:0.313px;">7 Information</div>
<div style="position:absolute;left:197px;top:595px;width:1168px;height:111px;background:#fff;border:1px solid #000;box-sizing:border-box"></div>
<div style="position:absolute;left:198px;top:596px;width:1166px;height:1px;background:#c4c4c4"></div>
<div style="position:absolute;left:198px;top:617px;width:1150px;height:1px;background:#a0a0a0"></div>
<div style="position:absolute;left:198px;top:640px;width:1150px;height:1px;background:#a0a0a0"></div>
<div style="position:absolute;left:198px;top:663px;width:1150px;height:1px;background:#a0a0a0"></div>
<div style="position:absolute;left:198px;top:664px;width:1150px;height:22px;background:#0078d7"></div>
<div style="position:absolute;left:198px;top:686px;width:1150px;height:1px;background:#a0a0a0"></div>
<div style="position:absolute;left:223px;top:597px;width:1px;height:89px;background:#c8c8c8"></div>
<div style="position:absolute;left:1347px;top:617px;width:1px;height:70px;background:#a0a0a0"></div>
<div class="t" style="left:230.14px;top:601.64px;font-size:12px;color:#000;font-weight:normal;font-family:'Liberation Sans', sans-serif;letter-spacing:0.020px;">Details</div>
<svg style="position:absolute;left:203px;top:621px;" width="16" height="16" viewBox="0 0 16 16"><circle cx="8" cy="8" r="8" fill="#27ad5f"/><rect x="6.8" y="7" width="2.3" height="6" fill="#fff"/><rect x="6.8" y="4" width="2.3" height="1.9" fill="#fff"/></svg>
<svg style="position:absolute;left:203px;top:644px;" width="16" height="16" viewBox="0 0 16 16"><circle cx="8" cy="8" r="8" fill="#27ad5f"/><rect x="6.8" y="7" width="2.3" height="6" fill="#fff"/><rect x="6.8" y="4" width="2.3" height="1.9" fill="#fff"/></svg>
<svg style="position:absolute;left:203px;top:667px;" width="16" height="16" viewBox="0 0 16 16"><circle cx="8" cy="8" r="8" fill="#27ad5f"/><rect x="6.8" y="7" width="2.3" height="6" fill="#fff"/><rect x="6.8" y="4" width="2.3" height="1.9" fill="#fff"/></svg>
<div class="t" style="left:230.14px;top:624.04px;font-size:12px;color:#000;font-weight:normal;font-family:'Liberation Sans', sans-serif;letter-spacing:0.489px;">Reading&nbsp;&nbsp;C:\Users\DELL\Desktop\sl\30942992.13o</div>
<div class="t" style="left:230.14px;top:647.04px;font-size:12px;color:#000;font-weight:normal;font-family:'Liberation Sans', sans-serif;letter-spacing:0.489px;">Reading&nbsp;&nbsp;C:\Users\DELL\Desktop\sl\30942993.13o</div>
<div class="t" style="left:226.42px;top:669.84px;font-size:12px;color:#fff;font-weight:normal;font-family:'Liberation Sans', sans-serif;letter-spacing:0.796px;">Import finished</div>
<div style="position:absolute;left:1348px;top:597px;width:16px;height:108px;background:#f0f0f0"></div>
<div style="position:absolute;left:1349px;top:648px;width:15px;height:40px;background:#cdcdcd"></div>
<svg style="position:absolute;left:1350px;top:600px;" width="13" height="10" viewBox="0 0 13 10"><path d="M2.5 7.5L6.5 3.5L10.5 7.5" fill="none" stroke="#606060" stroke-width="1.9"/></svg>
<svg style="position:absolute;left:1350px;top:691px;" width="13" height="10" viewBox="0 0 13 10"><path d="M2.5 3L6.5 7L10.5 3" fill="none" stroke="#606060" stroke-width="1.9"/></svg>
<div style="position:absolute;left:0px;top:706px;width:1366px;height:21px;background:#f0f0f0"></div>
<div style="position:absolute;left:1px;top:709px;width:731px;height:18px;background:#fff"></div>
<div class="t" style="left:3.54px;top:711.44px;font-size:12px;color:#000;font-weight:normal;font-family:'Liberation Sans', sans-serif;letter-spacing:-0.380px;">Ready</div>
<div class="t" style="left:45.16px;top:711.44px;font-size:12px;color:#f00000;font-weight:normal;font-family:'Liberation Sans', sans-serif;letter-spacing:0.188px;">Tips: If using "PPK" and "advanced solution function", click "Setup - register" to register the software as professional version.</div>
</body></html>
